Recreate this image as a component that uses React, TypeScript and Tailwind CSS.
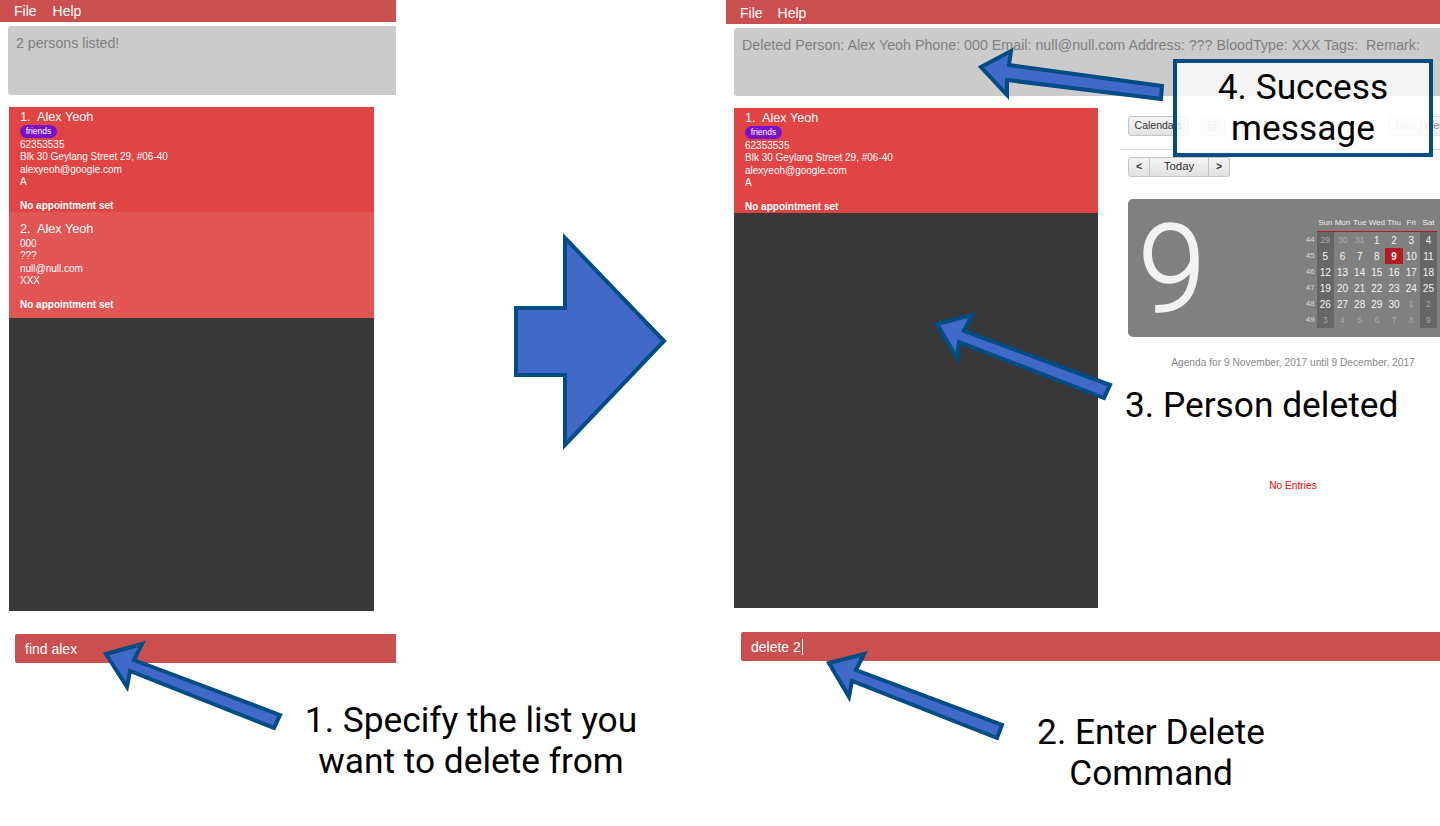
const sans = "font-['Liberation_Sans',Arial,sans-serif]";
const note = "font-['Roboto',sans-serif] text-[35.3px] leading-[41px] text-black";

interface Person {
  index: number;
  phone: string;
  address: string;
  email: string;
  blood: string;
  tag?: string;
}

const alex: Person = {
  index: 1,
  phone: "62353535",
  address: "Blk 30 Geylang Street 29, #06-40",
  email: "alexyeoh@google.com",
  blood: "A",
  tag: "friends",
};

const placeholder: Person = {
  index: 2,
  phone: "000",
  address: "???",
  email: "null@null.com",
  blood: "XXX",
};

const weeks = [
  { num: 44, days: [29, 30, 31, 1, 2, 3, 4] },
  { num: 45, days: [5, 6, 7, 8, 9, 10, 11] },
  { num: 46, days: [12, 13, 14, 15, 16, 17, 18] },
  { num: 47, days: [19, 20, 21, 22, 23, 24, 25] },
  { num: 48, days: [26, 27, 28, 29, 30, 1, 2] },
  { num: 49, days: [3, 4, 5, 6, 7, 8, 9] },
];

const weekdays = ["Sun", "Mon", "Tue", "Wed", "Thu", "Fri", "Sat"];

function MenuBar({ className }: { className: string }) {
  return (
    <div className={`flex bg-[#cc4f4f] pl-[14px] text-[14px] leading-none text-white ${className}`}>
      <span>File</span>
      <span>Help</span>
    </div>
  );
}

function PersonCard({ person, bg, className }: { person: Person; bg: string; className: string }) {
  return (
    <div className={`pl-[11px] text-[10px] leading-[12.3px] text-white ${bg} ${className}`}>
      <div className="text-[12.7px] leading-[14px] whitespace-pre">{person.index}.  Alex Yeoh</div>
      {person.tag && (
        <div className="mt-[1px] mb-[1px] flex h-[13px] w-[37px] items-center justify-center rounded-full bg-[#7a10c8] text-[8.5px] leading-none">
          {person.tag}
        </div>
      )}
      <div className={person.tag ? "" : "mt-[2px]"}>{person.phone}</div>
      <div>{person.address}</div>
      <div>{person.email}</div>
      <div>{person.blood}</div>
      <div className="mt-[12.3px] font-bold">No appointment set</div>
    </div>
  );
}

function MiniCalendar() {
  return (
    <div className="mt-[22px] ml-[7px] flex h-[138px] justify-between rounded-[5px] bg-[#808080] pr-[28px]">
      <div className="ml-[10px] pt-[4px] font-['Roboto',sans-serif] text-[122px] leading-[134px] font-light text-[#f2f2f2] [-webkit-text-stroke:1.5px_#f2f2f2]">9</div>
      <div className="pt-[19px]">
        <div className="flex h-[13px] pl-[17px] text-[8px] leading-[10px] text-[#eeeeee]">
          {weekdays.map((d) => (
            <span key={d} className="w-[17.2px] text-center">{d}</span>
          ))}
        </div>
        <div className="ml-[17px] h-[1px] bg-[#b01e23]" />
        {weeks.map((week, i) => (
          <div key={week.num} className="flex h-[16px] items-center text-[10px]">
            <span className="w-[17px] pr-[2px] text-right text-[8px] text-[#dddddd]">{week.num}</span>
            {week.days.map((day, j) => {
              const muted = (i === 0 && day > 20) || (i === 4 && day < 10) || i === 5;
              const today = i === 1 && day === 9;
              return (
                <span
                  key={j}
                  className={`flex h-full w-[17.2px] items-center justify-center ${
                    j === 0 || j === 6 ? "bg-[#666666]" : ""
                  } ${today ? "bg-[#b01e23] font-bold" : ""} ${
                    muted ? "text-[8.5px] text-[#aaaaaa]" : "text-[#f4f4f4]"
                  }`}
                >
                  {day}
                </span>
              );
            })}
          </div>
        ))}
      </div>
    </div>
  );
}

function Btn({ children, className }: { children?: React.ReactNode; className: string }) {
  return (
    <div
      className={`flex h-[20px] items-center justify-center border border-[#c4c4c4] bg-gradient-to-b from-[#f4f4f4] to-[#e2e2e2] text-[10.5px] text-[#333333] ${className}`}
    >
      {children}
    </div>
  );
}

function CalendarPanel() {
  return (
    <div className="ml-[23px] w-[344px] shrink-0">
      <div className="flex h-[42px] items-start border-b border-[#dddddd] pt-[8px] pl-[7px]">
        <Btn className="w-[61px] rounded-[3px]">Calendars</Btn>
        <Btn className="ml-[12px] w-[24px] rounded-[3px] opacity-60">
          <svg width="11" height="10" viewBox="0 0 11 10" fill="none" stroke="#aaaaaa" strokeWidth="1">
            <path d="M.5.5h10v9H.5zM.5 3.5h10M.5 6.5h10M4 .5v9M7.5.5v9" />
          </svg>
        </Btn>
        <Btn className="ml-[7px] w-[24px] rounded-l-[3px] opacity-60" />
        <Btn className="w-[23px] border-l-0 from-[#dddddd] to-[#d4d4d4] opacity-60" />
        <Btn className="w-[24px] rounded-r-[3px] border-l-0 opacity-60" />
        <Btn className="ml-[86px] w-[32px] rounded-l-[3px] text-[#aaaaaa] opacity-60">Day</Btn>
        <Btn className="w-[32px] opacity-60">Week</Btn>
      </div>
      <div className="mt-[7px] ml-[7px] flex">
        <Btn className="w-[22px] rounded-l-[3px] font-bold">&lt;</Btn>
        <Btn className="w-[59px] border-l-0 text-[11.5px]">Today</Btn>
        <Btn className="w-[21px] rounded-r-[3px] border-l-0 font-bold">&gt;</Btn>
      </div>
      <MiniCalendar />
      <div className="mt-[20px] text-center text-[10.2px] leading-[12px] text-[#888888]">
        Agenda for 9 November, 2017 until 9 December, 2017
      </div>
      <div className="mt-[111px] text-center text-[10.2px] leading-[12px] text-[#ff0000]">No Entries</div>
    </div>
  );
}

function LeftPanel() {
  return (
    <div className={`absolute top-0 left-0 w-[396px] ${sans}`}>
      <MenuBar className="h-[22px] gap-[16px] pt-[4px]" />
      <div className="mt-[4px] ml-[8px] h-[69px] rounded-l-[3px] bg-[#cbcbcb] pt-[9px] pl-[8px] text-[14.2px] leading-[16px] text-[#808080]">
        2 persons listed!
      </div>
      <div className="mt-[12px] ml-[9px] h-[504px] w-[365px] bg-[#383838]">
        <PersonCard person={alex} bg="bg-[#e04444]" className="h-[105px] pt-[3px]" />
        <PersonCard person={placeholder} bg="bg-[#e25555]" className="h-[106px] pt-[10px]" />
      </div>
      <div className="mt-[23px] ml-[15px] h-[29px] rounded-l-[2px] bg-[#cc4f4f] pt-[7px] pl-[10px] text-[14px] leading-[16px] text-white">
        find alex
      </div>
    </div>
  );
}

function RightPanel() {
  return (
    <div className={`absolute top-0 left-[726px] w-[714px] overflow-hidden ${sans}`}>
      <MenuBar className="h-[24px] gap-[15px] pt-[6px]" />
      <div className="mt-[4px] ml-[8px] h-[68px] rounded-l-[3px] bg-[#cbcbcb] pt-[9px] pl-[8px] text-[14.27px] leading-[16px] whitespace-pre text-[#808080]">
        Deleted Person: Alex Yeoh Phone: 000 Email: null@null.com Address: ??? BloodType: XXX Tags:  Remark:
      </div>
      <div className="mt-[12px] ml-[8px] flex h-[500px]">
        <div className="w-[364px] shrink-0 bg-[#383838]">
          <PersonCard person={alex} bg="bg-[#e04444]" className="h-[105px] pt-[3px]" />
        </div>
        <CalendarPanel />
      </div>
      <div className="mt-[24px] ml-[15px] flex h-[29px] items-start rounded-l-[2px] bg-[#cc4f4f] pt-[7px] pl-[10px] text-[14px] leading-[16px] text-white">
        delete 2<span className="ml-[1px] h-[16px] w-px bg-white" />
      </div>
    </div>
  );
}

export default function App() {
  const shapes = [
    "565,238 664,341 565,445 565,375 516,375 516,308 565,308",
    "106,654 142,644 134,660 280,715 274,728 130,671 127,687",
    "829,663 864,654 856,670 1002,725 997,738 852,681 849,697",
    "937,324 972,315 964,331 1110,385 1104,398 959,342 957,358",
    "981,67 1011,51 1009,65 1162,86 1161,99 1007,80 1007,95",
  ];

  return (
    <div className="relative h-[826px] w-[1440px] overflow-hidden bg-white">
      <LeftPanel />
      <RightPanel />

      <svg className="absolute top-0 left-0" width="1440" height="826" viewBox="0 0 1440 826">
        {shapes.map((points) => (
          <polygon key={points} points={points} fill="#4169c8" stroke="#004c85" strokeWidth="4" />
        ))}
      </svg>

      <div className={`absolute top-[59px] left-[1173px] flex h-[98px] w-[260px] items-center justify-center border-[4px] border-[#004c85] bg-white/80 text-center ${note}`}>
        <span>4. Success<br />message</span>
      </div>
      <div className={`absolute top-[700px] left-[271px] w-[400px] text-center ${note}`}>
        1. Specify the list you<br />want to delete from
      </div>
      <div className={`absolute top-[712px] left-[951px] w-[400px] text-center ${note}`}>
        2. Enter Delete<br />Command
      </div>
      <div className={`absolute top-[385px] left-[1125px] whitespace-nowrap ${note}`}>3. Person deleted</div>
    </div>
  );
}
